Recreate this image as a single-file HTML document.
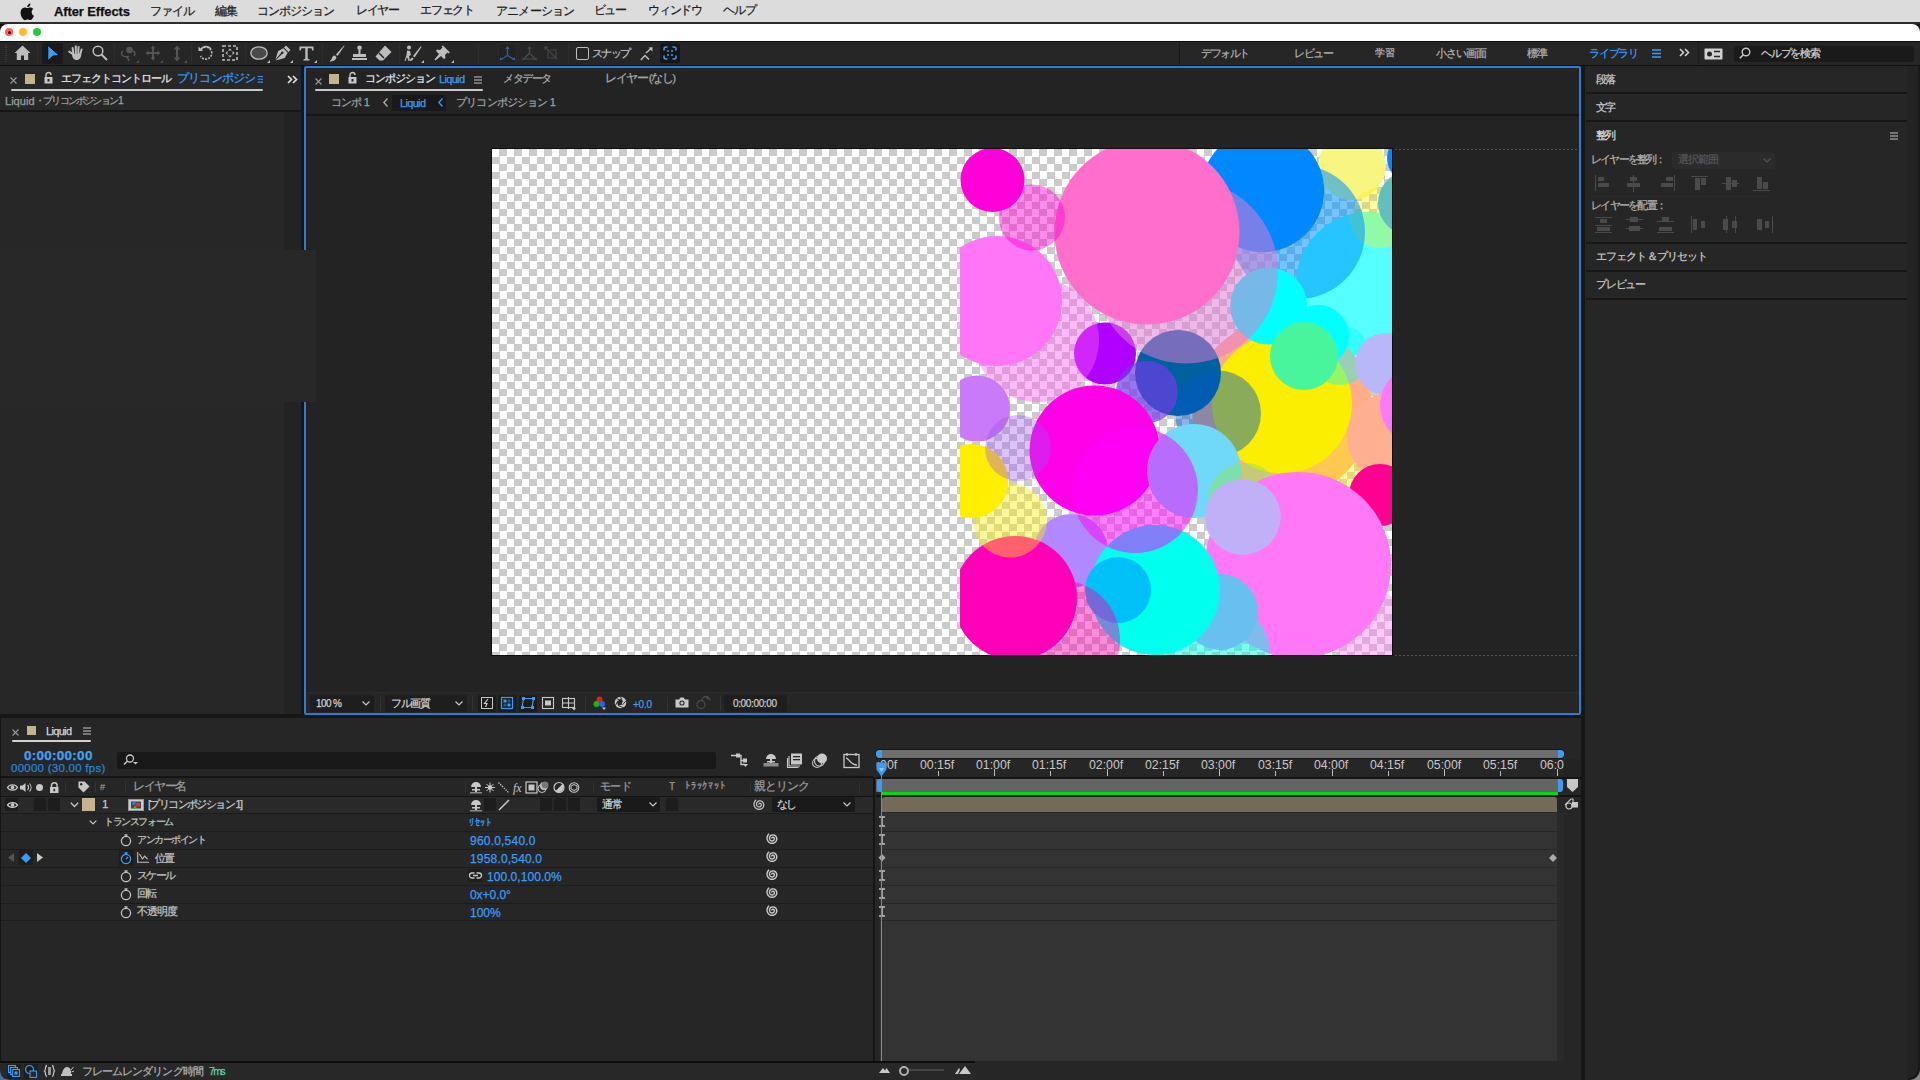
<!DOCTYPE html>
<html><head><meta charset="utf-8">
<style>
*{margin:0;padding:0;box-sizing:border-box}
html,body{width:1920px;height:1080px;overflow:hidden;background:#161616;font-family:"Liberation Sans",sans-serif}
.a{position:absolute}
.t{position:absolute;white-space:nowrap;line-height:1;-webkit-text-stroke:0.25px currentColor}
#menubar{left:0;top:0;width:1920px;height:22px;background:#dcdcdc}
#menubar .t{top:5px;font-size:12.5px;color:#1e1e1e;letter-spacing:-1.2px}
#title{left:0;top:24px;width:1920px;height:17px;background:#fff;border-radius:8px 8px 0 0}
#toolbar{left:0;top:42px;width:1920px;height:23px;background:#262626}
.pan{position:absolute;background:#232323}
.checker{background:repeating-conic-gradient(#cbcbcb 0 25%,#fff 0 50%) 0 0/15px 15px}
.g{color:#a8a8a8;font-size:11px;letter-spacing:-0.6px}
.w{color:#d8d8d8;font-size:11px;letter-spacing:-0.6px}
.b{color:#3d9cf2}
.sep{position:absolute;width:1px;background:#1b1b1b}
.hl{position:absolute;height:2px;background:#161616}
svg{position:absolute;overflow:visible}
</style></head><body>
<!-- menu bar -->
<div id="menubar" class="a">
  <svg style="left:20px;top:3px" width="14" height="17" viewBox="0 0 14 17"><path d="M11.6 9c0-2 1.6-2.9 1.7-3-1-1.4-2.4-1.6-2.9-1.6-1.2-.1-2.4.7-3 .7s-1.6-.7-2.6-.7C3.4 4.5 2 5.3 1.3 6.6c-1.5 2.6-.4 6.4 1 8.5.7 1 1.5 2.1 2.6 2.1 1 0 1.4-.7 2.7-.7s1.6.7 2.7.6c1.1 0 1.8-1 2.5-2 .8-1.1 1.1-2.2 1.1-2.3 0 0-2.3-.9-2.3-3.8zM9.6 3c.6-.7.9-1.6.8-2.5-.8 0-1.8.5-2.3 1.2-.5.6-1 1.5-.8 2.4.9.1 1.8-.4 2.3-1.1z" fill="#111"/></svg>
  <div class="t" style="left:54px;top:5px;font-weight:bold;letter-spacing:0;color:#111;font-size:13.0px;letter-spacing:-0.11px">After Effects</div>
  <div class="t" style="left:150px;font-size:12.11px;letter-spacing:-1.0px">ファイル</div>
  <div class="t" style="left:215px;font-size:11.68px;letter-spacing:-1.5px">編集</div>
  <div class="t" style="left:257px;font-size:12.13px;letter-spacing:-1.08px">コンポジション</div>
  <div class="t" style="left:356px;font-size:11.87px;letter-spacing:-1.34px">レイヤー</div>
  <div class="t" style="left:420px;font-size:11.96px;letter-spacing:-1.25px">エフェクト</div>
  <div class="t" style="left:496px;font-size:12.33px;letter-spacing:-0.83px">アニメーション</div>
  <div class="t" style="left:594px;font-size:11.57px;letter-spacing:-1.75px">ビュー</div>
  <div class="t" style="left:648px;font-size:11.96px;letter-spacing:-1.25px">ウィンドウ</div>
  <div class="t" style="left:723px;font-size:11.89px;letter-spacing:-1.25px">ヘルプ</div>
</div>
<div class="a" style="left:0;top:22px;width:1920px;height:2px;background:#2e2e2e"></div>
<div class="a" style="left:0;top:24px;width:12px;height:12px;background:#111"></div>
<div id="title" class="a">
  <div class="a" style="left:5px;top:4px;width:8px;height:8px;border-radius:50%;background:#fe5f57"><div class="a" style="left:2.5px;top:2.5px;width:3px;height:3px;border-radius:50%;background:#4d0000"></div></div>
  <div class="a" style="left:19px;top:4px;width:8px;height:8px;border-radius:50%;background:#febc2e"></div>
  <div class="a" style="left:33px;top:4px;width:8px;height:8px;border-radius:50%;background:#28c840"></div>
</div>
<div class="a" style="left:0;top:41px;width:1920px;height:1px;background:#0c0c0c"></div>
<div id="toolbar" class="a">
  <!-- grip -->
  <div class="a" style="left:5px;top:3px;width:2px;height:17px;background:repeating-linear-gradient(#3a3a3a 0 1px,transparent 1px 2px)"></div>
  <!-- home -->
  <svg style="left:14px;top:3px" width="17" height="16" viewBox="0 0 17 16"><path d="M8.5 0.5L0.5 8h2.3v7h4.2v-4.5h3v4.5h4.2V8h2.3z" fill="#bdbdbd"/></svg>
  <div class="sep" style="left:37px;top:2px;height:19px;background:#2e2e2e"></div>
  <!-- selection -->
  <div class="a" style="left:42px;top:1px;width:21px;height:21px;background:#1a1a1a;border-radius:2px"></div>
  <svg style="left:47px;top:2px" width="13" height="18" viewBox="0 0 13 18"><path d="M0.8 1.2L12 11.3 6 12 0.8 16.8z" fill="#3c9ef3" stroke="#000" stroke-width="0.8" stroke-linejoin="miter"/></svg>
  <!-- hand -->
  <svg style="left:68px;top:45px;top:3px" width="16" height="16" viewBox="0 0 16 16"><g stroke="#bdbdbd" stroke-width="2" stroke-linecap="round" fill="none"><path d="M4.6 9L1.3 6.6"/><path d="M5.2 8.5L4.6 3"/><path d="M7.8 8L7.8 1.3"/><path d="M10.2 8L10.6 2"/><path d="M12.2 9L13.6 4.5"/></g><path d="M4 8.5h9.3c0 4-1.5 6.5-4.8 6.5C5.5 15 4 12.5 4 8.5z" fill="#bdbdbd"/></svg>
  <!-- zoom -->
  <svg style="left:92px;top:3px" width="16" height="16" viewBox="0 0 16 16"><circle cx="6" cy="6" r="4.8" fill="none" stroke="#bdbdbd" stroke-width="1.5"/><path d="M9.5 9.5L15 15" stroke="#bdbdbd" stroke-width="2"/></svg>
  <div class="sep" style="left:114px;top:2px;height:19px;background:#2e2e2e"></div>
  <!-- dim tools -->
  <svg style="left:120px;top:3px" width="18" height="17" viewBox="0 0 18 17"><circle cx="9.5" cy="5" r="3.3" fill="#555"/><path d="M3 6a3 3 0 00-1 4c1 2 4 2 7 1.5M7 13l2 1.5-1 1.5M13 6c2 1 3 3 1 5" fill="none" stroke="#555" stroke-width="1.4"/></svg>
  <svg style="left:145px;top:3px" width="16" height="16" viewBox="0 0 16 16"><path d="M8 0.5l2.5 3H9v3.5h3.5V5.5l3 2.5-3 2.5V9H9v3.5h1.5L8 15.5l-2.5-3H7V9H3.5v1.5L0.5 8l3-2.5V7H7V3.5H5.5z" fill="#555"/></svg>
  <svg style="left:171px;top:3px" width="12" height="17" viewBox="0 0 12 17"><path d="M6 0.5l3.5 4H7v8h2.5L6 16.5l-3.5-4H5v-8H2.5z" fill="#555"/></svg>
  <div class="a" style="left:136px;top:18px;width:3px;height:3px;background:#555;clip-path:polygon(100% 0,100% 100%,0 100%)"></div>
  <div class="a" style="left:160px;top:18px;width:3px;height:3px;background:#555;clip-path:polygon(100% 0,100% 100%,0 100%)"></div>
  <div class="a" style="left:184px;top:18px;width:3px;height:3px;background:#555;clip-path:polygon(100% 0,100% 100%,0 100%)"></div>
  <div class="sep" style="left:191px;top:2px;height:19px;background:#2e2e2e"></div>
  <!-- rotate -->
  <svg style="left:198px;top:3px" width="16" height="16" viewBox="0 0 16 16"><path d="M3 4.5A6 6 0 1 1 2.5 11" fill="none" stroke="#bdbdbd" stroke-width="1.6" stroke-dasharray="2 1.2"/><path d="M3 4.5A6 6 0 0 1 13 4" fill="none" stroke="#bdbdbd" stroke-width="1.6"/><path d="M0.5 1.5L5 6H0.5z" fill="#bdbdbd"/></svg>
  <!-- region of interest -->
  <svg style="left:222px;top:3px" width="16" height="16" viewBox="0 0 16 16"><rect x="1" y="1" width="14" height="14" fill="none" stroke="#bdbdbd" stroke-width="1.6" stroke-dasharray="3 2"/><path d="M8 3.5l2 2H6zM8 12.5l2-2H6zM3.5 8l2 2V6zM12.5 8l-2 2V6z" fill="#bdbdbd"/></svg>
  <div class="sep" style="left:245px;top:2px;height:19px;background:#2e2e2e"></div>
  <!-- ellipse -->
  <svg style="left:250px;top:4px" width="18" height="14" viewBox="0 0 18 14"><ellipse cx="9" cy="7" rx="8.2" ry="6.2" fill="#4a4a4a" stroke="#bdbdbd" stroke-width="1.3"/></svg>
  <div class="a" style="left:267px;top:18px;width:3px;height:3px;background:#bdbdbd;clip-path:polygon(100% 0,100% 100%,0 100%)"></div>
  <!-- pen -->
  <svg style="left:275px;top:3px" width="16" height="16" viewBox="0 0 16 16"><path d="M11 0.5l4.5 4.5-2 2L9 2.5zM8.3 3.3l4.4 4.4-3 5.3L0.5 15.5 7 9a1.3 1.3 0 10-1-1L0.5 14.5 3 6.3z" fill="#bdbdbd"/></svg>
  <div class="a" style="left:290px;top:18px;width:3px;height:3px;background:#bdbdbd;clip-path:polygon(100% 0,100% 100%,0 100%)"></div>
  <!-- T -->
  <svg style="left:299px;top:4px" width="15" height="15" viewBox="0 0 15 15"><path d="M0.5 0.5h14v4h-1.3l-.7-2.2H8.7v10.5l1.8.5v1.2h-6v-1.2l1.8-.5V2.3H2.5L1.8 4.5H0.5z" fill="#bdbdbd"/></svg>
  <div class="a" style="left:314px;top:18px;width:3px;height:3px;background:#bdbdbd;clip-path:polygon(100% 0,100% 100%,0 100%)"></div>
  <div class="sep" style="left:322px;top:2px;height:19px;background:#2e2e2e"></div>
  <!-- brush -->
  <svg style="left:329px;top:3px" width="16" height="17" viewBox="0 0 16 17"><path d="M15 0.5L7 9.5l1.5 1.5L15.5 1z" fill="#bdbdbd"/><path d="M6 10.5c-2 0-3 1.5-3.2 3.2L0.5 16.5c3 0 6-.8 7-4z" fill="#bdbdbd"/></svg>
  <!-- stamp -->
  <svg style="left:351px;top:3px" width="17" height="16" viewBox="0 0 17 16"><circle cx="8.5" cy="2.8" r="2.3" fill="#bdbdbd"/><path d="M7.5 4.5h2v4.5h5.5v3H2V9h5.5zM1 13h15v2H1z" fill="#bdbdbd"/></svg>
  <!-- eraser -->
  <svg style="left:375px;top:3px" width="17" height="16" viewBox="0 0 17 16"><path d="M10 0.5l6.5 6.5-8.5 8.5H4.5L0.5 11.5z" fill="#bdbdbd"/><path d="M4 8l5 5" stroke="#262626" stroke-width="1.5"/></svg>
  <div class="sep" style="left:399px;top:2px;height:19px;background:#2e2e2e"></div>
  <!-- roto -->
  <svg style="left:404px;top:3px" width="18" height="17" viewBox="0 0 18 17"><circle cx="5" cy="2.5" r="2" fill="#bdbdbd"/><path d="M3 5.5l3 .5 1 4-2 1 1 5H4.5l-1.5-4-1.5 4H0.5l2-6zM17 1L9 11l1.5 1.5L17.5 2zM8 12.5c-1 .5-1.5 2-3 3.5 2 0 4-.5 4.5-2.5z" fill="#bdbdbd"/></svg>
  <div class="a" style="left:421px;top:18px;width:3px;height:3px;background:#bdbdbd;clip-path:polygon(100% 0,100% 100%,0 100%)"></div>
  <!-- pin -->
  <svg style="left:434px;top:3px" width="17" height="16" viewBox="0 0 17 16"><path d="M9 0.5l7 7-1.5 1-1-1-2.5 2.5.5 3-1.5 1-3-3L1.5 15.5 0.5 14.5 5 9 2 6l1-1.5 3 .5L8.5 2.5l-1-1z" fill="#bdbdbd"/></svg>
  <div class="a" style="left:451px;top:18px;width:3px;height:3px;background:#bdbdbd;clip-path:polygon(100% 0,100% 100%,0 100%)"></div>
  <div class="sep" style="left:478px;top:2px;height:19px;background:#2e2e2e"></div>
  <!-- 3d axis -->
  <div class="a" style="left:498px;top:1px;width:19px;height:20px;background:#222;border:1px solid #2a2a2a;border-radius:2px"></div>
  <svg style="left:499px;top:4px" width="17" height="16" viewBox="0 0 17 16"><path d="M8.5 2v7.5L2 13.5M8.5 9.5l6.5 4" fill="none" stroke="#2d62a0" stroke-width="1.3"/><path d="M8.5 0l2.2 3h-4.4zM0.5 14.5l1-3.5 2.2 2.7zM16.5 14.5l-1-3.5-2.2 2.7z" fill="#2d62a0"/></svg>
  <svg style="left:521px;top:4px" width="17" height="16" viewBox="0 0 17 16"><path d="M8.5 2v5M8.5 7L3 13M8.5 7l5.5 6M3 13h11" fill="none" stroke="#4a4a4a" stroke-width="1.2"/><path d="M8.5 0l2 2.7h-4zM1 14.5l.8-3.2 2 2.4zM16 14.5l-.8-3.2-2 2.4z" fill="#4a4a4a"/></svg>
  <svg style="left:544px;top:4px" width="15" height="15" viewBox="0 0 15 15"><path d="M1 1l12 12M4 4v8h8V4H6" fill="none" stroke="#444" stroke-width="1.2"/><path d="M0.5 0.5h4l-4 4z" fill="#444"/></svg>
  <div class="sep" style="left:568px;top:2px;height:19px;background:#2e2e2e"></div>
  <div class="a" style="left:576px;top:5px;width:13px;height:13px;border:1.6px solid #bdbdbd;border-radius:2px"></div>
  <div class="t" style="left:592px;top:6px;color:#c0c0c0;font-size:10.73px;letter-spacing:-1.54px">スナップ</div>
  <svg style="left:640px;top:5px" width="13" height="14" viewBox="0 0 13 14"><path d="M6 6l6-5.5" stroke="#bdbdbd" stroke-width="1.4"/><path d="M8.5 0.5h4v4z" fill="#bdbdbd"/><path d="M0.8 13L5 8.5l4 4" fill="none" stroke="#bdbdbd" stroke-width="1.5"/></svg>
  <div class="a" style="left:660px;top:1px;width:20px;height:20px;background:#161616;border-radius:2px"></div>
  <svg style="left:663px;top:4px" width="14" height="14" viewBox="0 0 14 14"><path d="M1 4.5V3a2 2 0 012-2h1.5M9.5 1H11a2 2 0 012 2v1.5M13 9.5V11a2 2 0 01-2 2H9.5M4.5 13H3a2 2 0 01-2-2V9.5" fill="none" stroke="#3c9ef3" stroke-width="1.5"/><circle cx="5" cy="5" r="1" fill="#3c9ef3"/><circle cx="9" cy="5" r="1" fill="#3c9ef3"/><circle cx="5" cy="9" r="1" fill="#3c9ef3"/><circle cx="9" cy="9" r="1" fill="#3c9ef3"/></svg>
  <!-- right workspaces -->
  <div class="sep" style="left:1179px;top:0;height:23px;background:#1a1a1a"></div>
  <div class="t g" style="left:1201px;top:6px;color:#b0b0b0;font-size:10.85px;letter-spacing:-1.4px">デフォルト</div>
  <div class="t g" style="left:1294px;top:6px;color:#b0b0b0;font-size:10.78px;letter-spacing:-1.47px">レビュー</div>
  <div class="t g" style="left:1375px;top:6px;color:#b0b0b0;font-size:10.34px;letter-spacing:-0.21px">学習</div>
  <div class="t g" style="left:1436px;top:6px;color:#b0b0b0;font-size:11.08px;letter-spacing:-1.1px">小さい画面</div>
  <div class="t g" style="left:1527px;top:6px;color:#b0b0b0;font-size:10.73px;letter-spacing:-1.41px">標準</div>
  <div class="t b" style="left:1589px;top:6px;font-size:11.02px;letter-spacing:-1.18px">ライブラリ</div>
  <svg style="left:1652px;top:7px" width="9" height="9" viewBox="0 0 9 9"><path d="M0 1h9M0 4.5h9M0 8h9" stroke="#3d9cf2" stroke-width="1.4"/></svg>
  <svg style="left:1679px;top:6px" width="11" height="9" viewBox="0 0 11 9"><path d="M1 1l3.5 3.5L1 8M6 1l3.5 3.5L6 8" fill="none" stroke="#d0d0d0" stroke-width="1.6"/></svg>
  <div class="sep" style="left:1698px;top:0;height:23px;background:#1e1e1e"></div>
  <svg style="left:1704px;top:6px" width="19" height="12" viewBox="0 0 19 12"><rect x="0.5" y="0.5" width="18" height="11" rx="1" fill="#d0d0d0"/><circle cx="5.5" cy="6" r="2.5" fill="#262626"/><path d="M10 3.5h6M10 8.5h6" stroke="#262626" stroke-width="1.5"/></svg>
  <div class="a" style="left:1734px;top:4px;width:180px;height:16px;background:#1a1a1a;border-radius:3px"></div>
  <svg style="left:1739px;top:5px" width="12" height="12" viewBox="0 0 12 12"><circle cx="7" cy="5" r="3.8" fill="none" stroke="#c8c8c8" stroke-width="1.4"/><path d="M4.3 7.7L0.8 11.2" stroke="#c8c8c8" stroke-width="1.6"/></svg>
  <div class="t w" style="left:1761px;top:6px;color:#d0d0d0;font-size:11.02px;letter-spacing:-1.2px">ヘルプを検索</div>
</div>
<div class="a" style="left:0;top:65px;width:1920px;height:1px;background:#101010"></div>
<!-- left panel -->
<div class="pan" style="left:0;top:66px;width:301px;height:648px;background:#272727">
  <svg style="left:10px;top:11px" width="7" height="7" viewBox="0 0 7 7"><path d="M0.5 0.5l6 6M6.5 0.5l-6 6" stroke="#9a9a9a" stroke-width="1.1"/></svg>
  <div class="a" style="left:25px;top:8px;width:10px;height:10px;background:#c5b38d"></div>
  <svg style="left:44px;top:6px" width="9" height="12" viewBox="0 0 9 12"><path d="M2 5V3a2.5 2.5 0 015 0" fill="none" stroke="#c8c8c8" stroke-width="1.4"/><rect x="0.5" y="5" width="8" height="6.5" fill="#c8c8c8"/><rect x="3.5" y="7" width="2" height="2.5" fill="#232323"/></svg>
  <div class="t" style="left:61px;top:7px;color:#e6e6e6;font-size:11.24px;letter-spacing:-1.0px">エフェクトコントロール</div>
  <div class="a" style="left:177px;top:4px;width:86px;height:18px;overflow:hidden"><div class="t b" style="left:0;top:3px;font-size:11.5px;letter-spacing:-0.8px">プリコンポジション 1</div></div>
  <div class="a" style="left:11px;top:23px;width:252px;height:2px;background:#c8c8c8;border-radius:1px"></div>
  <svg style="left:287px;top:9px" width="11" height="9" viewBox="0 0 11 9"><path d="M1 1l3.5 3.5L1 8M6 1l3.5 3.5L6 8" fill="none" stroke="#e0e0e0" stroke-width="1.7"/></svg>
  <div class="t" style="left:5px;top:30px;color:#a0a0a0;font-size:11.0px;letter-spacing:0.03px">Liquid</div><div class="t" style="left:35px;top:30px;color:#a0a0a0;font-size:10.41px;letter-spacing:-1.8px">・プリコンポジション 1</div>
  <div class="a" style="left:0;top:44px;width:301px;height:2px;background:#171717"></div>
  <div class="a" style="left:284px;top:46px;width:17px;height:138px;background:#232323"></div>
</div>
<div class="a" style="left:284px;top:402px;width:17px;height:312px;background:#232323"></div>
<!-- comp panel -->
<div class="pan" style="left:304px;top:66px;width:1277px;height:649px;border:2px solid #2f7bd3;border-radius:2px">
</div>
<div class="a" style="left:306px;top:68px;width:1273px;height:645px">
  <svg style="left:9px;top:10px" width="7" height="7" viewBox="0 0 7 7"><path d="M0.5 0.5l6 6M6.5 0.5l-6 6" stroke="#9a9a9a" stroke-width="1.1"/></svg>
  <div class="a" style="left:23px;top:6px;width:10px;height:10px;background:#c5b38d"></div>
  <svg style="left:42px;top:4px" width="9" height="12" viewBox="0 0 9 12"><path d="M2 5V3a2.5 2.5 0 015 0" fill="none" stroke="#c8c8c8" stroke-width="1.4"/><rect x="0.5" y="5" width="8" height="6.5" fill="#c8c8c8"/><rect x="3.5" y="7" width="2" height="2.5" fill="#232323"/></svg>
  <div class="t" style="left:59px;top:5px;color:#e6e6e6;font-size:11.2px;letter-spacing:-1.0px">コンポジション</div>
  <div class="t b" style="left:133px;top:6px;font-size:11.0px;letter-spacing:-0.67px">Liquid</div>
  <svg style="left:168px;top:8px" width="8" height="8" viewBox="0 0 8 8"><path d="M0 1h8M0 4h8M0 7h8" stroke="#c8c8c8" stroke-width="1.2"/></svg>
  <div class="a" style="left:9px;top:21px;width:168px;height:2px;background:#c8c8c8;border-radius:1px"></div>
  <div class="t" style="left:197px;top:5px;color:#a8a8a8;font-size:10.77px;letter-spacing:-1.5px">メタデータ</div>
  <div class="t" style="left:299px;top:5px;color:#a8a8a8;font-size:11.5px;letter-spacing:-1.48px">レイヤー (なし)</div>
  <div class="t" style="left:25px;top:29px;color:#a0a0a0;font-size:11.0px;letter-spacing:-0.8px">コンポ 1</div>
  <svg style="left:77px;top:30px" width="5" height="9" viewBox="0 0 5 9"><path d="M4.5 0.5L0.8 4.5l3.7 4" fill="none" stroke="#b0b0b0" stroke-width="1.2"/></svg>
  <div class="a" style="left:86px;top:27px;width:54px;height:16px;background:#181818;border-radius:2px"></div>
  <div class="t b" style="left:94px;top:30px;font-size:11.0px;letter-spacing:-0.67px">Liquid</div>
  <svg style="left:132px;top:30px" width="5" height="9" viewBox="0 0 5 9"><path d="M4.5 0.5L0.8 4.5l3.7 4" fill="none" stroke="#3d9cf2" stroke-width="1.3"/></svg>
  <div class="t" style="left:150px;top:29px;color:#a0a0a0;font-size:11.0px;letter-spacing:-0.82px">プリコンポジション 1</div>
  <div class="a" style="left:0;top:46px;width:1273px;height:2px;background:#161616"></div>
  <!-- guides -->
  <div class="a" style="left:1089px;top:81px;width:184px;height:1px;background:repeating-linear-gradient(90deg,#5a5040 0 2px,transparent 2px 4px)"></div>
  <div class="a" style="left:1089px;top:587px;width:184px;height:1px;background:repeating-linear-gradient(90deg,#5a5040 0 2px,transparent 2px 4px)"></div>
  <!-- bottom toolbar -->
  <div class="a" style="left:0;top:624px;width:1273px;height:1px;background:#2c2c2c"></div>
  <div class="a" style="left:0;top:625px;width:1273px;height:20px;background:#262626"></div>
  <div class="a" style="left:4px;top:627px;width:64px;height:17px;background:#1e1e1e;border-radius:2px"></div>
  <div class="t" style="left:10px;top:631px;color:#d0d0d0;font-size:10.0px;letter-spacing:-0.59px">100 %</div>
  <svg style="left:56px;top:633px" width="8" height="5" viewBox="0 0 8 5"><path d="M0.5 0.5L4 4l3.5-3.5" fill="none" stroke="#c8c8c8" stroke-width="1.2"/></svg>
  <div class="sep" style="left:74px;top:628px;height:15px;background:#333"></div>
  <div class="a" style="left:79px;top:627px;width:82px;height:17px;background:#1e1e1e;border-radius:2px"></div>
  <div class="t" style="left:85px;top:630px;color:#d0d0d0;font-size:11.0px;letter-spacing:-1.34px">フル画質</div>
  <svg style="left:149px;top:633px" width="8" height="5" viewBox="0 0 8 5"><path d="M0.5 0.5L4 4l3.5-3.5" fill="none" stroke="#c8c8c8" stroke-width="1.2"/></svg>
  <div class="sep" style="left:166px;top:628px;height:15px;background:#333"></div>
  <div class="a" style="left:172px;top:627px;width:18px;height:17px;background:#1c1c1c"></div>
  <svg style="left:175px;top:629px" width="12" height="12" viewBox="0 0 12 12"><rect x="0.5" y="0.5" width="11" height="11" fill="none" stroke="#c8c8c8" stroke-width="1"/><path d="M7 2L3.5 6.5h2.5L4.5 10" fill="none" stroke="#c8c8c8" stroke-width="1.2"/></svg>
  <div class="a" style="left:192px;top:627px;width:18px;height:17px;background:#1c1c1c"></div>
  <svg style="left:195px;top:629px" width="12" height="12" viewBox="0 0 12 12"><rect x="0.5" y="0.5" width="11" height="11" fill="none" stroke="#3d9cf2" stroke-width="1.2"/><rect x="2.5" y="2.5" width="3" height="3" fill="#3d9cf2"/><rect x="6.5" y="6.5" width="3" height="3" fill="#3d9cf2"/><rect x="6.5" y="2.5" width="3" height="3" fill="#1f5a99"/><rect x="2.5" y="6.5" width="3" height="3" fill="#1f5a99"/></svg>
  <div class="a" style="left:213px;top:627px;width:18px;height:17px;background:#1c1c1c"></div>
  <svg style="left:215px;top:629px" width="14" height="12" viewBox="0 0 14 12"><path d="M2.5 1.5h10l-1.5 9H1z" fill="none" stroke="#3d9cf2" stroke-width="1.2"/><rect x="1" y="0" width="3" height="3" fill="#3d9cf2"/><rect x="11" y="0" width="3" height="3" fill="#3d9cf2"/><rect x="0" y="9" width="3" height="3" fill="#3d9cf2"/><rect x="10" y="9" width="3" height="3" fill="#3d9cf2"/></svg>
  <svg style="left:236px;top:629px" width="12" height="12" viewBox="0 0 12 12"><rect x="0.5" y="0.5" width="11" height="11" fill="none" stroke="#c8c8c8" stroke-width="1.1"/><rect x="3" y="3.5" width="6" height="5" fill="#c8c8c8"/></svg>
  <svg style="left:256px;top:628px" width="15" height="15" viewBox="0 0 15 15"><rect x="0.5" y="2.5" width="12" height="9" fill="none" stroke="#c8c8c8" stroke-width="1.1"/><path d="M6.5 1v12M0 7h13" stroke="#c8c8c8" stroke-width="1.1"/><path d="M10 12h4l-2 2.5z" fill="#c8c8c8"/></svg>
  <div class="sep" style="left:279px;top:628px;height:15px;background:#333"></div>
  <svg style="left:287px;top:628px" width="14" height="14" viewBox="0 0 14 14"><circle cx="6.5" cy="3.5" r="3" fill="#e02020"/><circle cx="3.5" cy="8" r="3" fill="#20b020"/><circle cx="9" cy="8" r="3" fill="#3060e0"/><path d="M9 11.5h4l-2 2.5z" fill="#c8c8c8"/></svg>
  <svg style="left:308px;top:628px" width="13" height="13" viewBox="0 0 13 13"><circle cx="6.5" cy="6.5" r="5.8" fill="#c8c8c8"/><path d="M6.5 2.5l2 3-1 3.5-3.5.3-1-3.3z" fill="#262626"/><path d="M6.5 0.7l2 4.8M11.8 5l-3.3 3.9M9.5 11.8l-5.5-2.5M1.5 9.5l2.3-4.7M2.5 2.5L8.5 5.5" stroke="#262626" stroke-width="0.9"/></svg>
  <div class="t b" style="left:327px;top:632px;font-size:10.0px;letter-spacing:-0.25px">+0.0</div>
  <div class="sep" style="left:361px;top:628px;height:15px;background:#333"></div>
  <svg style="left:369px;top:629px" width="14" height="11" viewBox="0 0 14 11"><path d="M0.5 2.5h3.5l1.5-2h3l1.5 2h3.5v8H0.5z" fill="#c8c8c8"/><circle cx="7" cy="6" r="2.6" fill="#262626"/><circle cx="7" cy="6" r="1.5" fill="#c8c8c8"/></svg>
  <svg style="left:390px;top:628px" width="14" height="13" viewBox="0 0 14 13"><path d="M1 8.5a4 4 0 008 0 4 4 0 00-8 0zM6 4.5a4 4 0 018 0M10 1l2.5 2.5" fill="none" stroke="#4a4a4a" stroke-width="1.3"/></svg>
  <div class="sep" style="left:414px;top:628px;height:15px;background:#333"></div>
  <div class="a" style="left:418px;top:627px;width:63px;height:17px;background:#1e1e1e;border-radius:2px"></div>
  <div class="t" style="left:427px;top:631px;color:#c8c8c8;font-size:10.0px;letter-spacing:-0.36px">0:00:00:00</div>
</div>
<div class="a" style="left:491px;top:148px;width:902px;height:508px;background:#0e0e0e"></div>
<div class="a checker" style="left:492px;top:149px;width:900px;height:506px"></div>
<div class="a" style="left:0;top:250px;width:316px;height:152px;background:#282828"></div>
<!-- composition circles -->
<svg style="left:492px;top:149px" width="900" height="506" viewBox="492 149 900 506"><defs><clipPath id="cl"><rect x="960" y="149" width="432" height="506"/></clipPath></defs><g clip-path="url(#cl)">
<circle cx="1105" cy="353.5" r="31" fill="#b000ff"/>
<circle cx="1037" cy="340" r="62" fill="rgba(255,90,240,0.42)"/>
<circle cx="997" cy="301" r="65" fill="#ff76f6"/>
<circle cx="1368" cy="284" r="72" fill="#55ffff"/>
<circle cx="1352" cy="166" r="34" fill="#f8f580"/>
<circle cx="1380" cy="218" r="30" fill="rgba(255,240,0,0.35)"/>
<circle cx="1410" cy="203" r="32" fill="#60c0c0"/>
<circle cx="1412" cy="158" r="25" fill="#0088ff"/>
<circle cx="1298" cy="232" r="67" fill="rgba(0,150,255,0.55)"/>
<circle cx="1262.6" cy="190.6" r="61.5" fill="#0088ff"/>
<circle cx="1282" cy="409" r="90" fill="#ffae88"/>
<circle cx="1340" cy="470" r="40" fill="rgba(255,240,0,0.4)"/>
<circle cx="1392" cy="437" r="45" fill="#ffb090"/>
<circle cx="1282" cy="403.5" r="70" fill="#fbee00"/>
<circle cx="1178" cy="373" r="43" fill="#0060a0"/>
<circle cx="1147" cy="392" r="31" fill="rgba(110,60,230,0.7)"/>
<circle cx="1218" cy="413.5" r="43" fill="rgba(0,90,200,0.45)"/>
<circle cx="1268.7" cy="306" r="38.5" fill="#00ffff"/>
<circle cx="1318" cy="336" r="31" fill="#00ffff"/>
<circle cx="1340" cy="355" r="30" fill="rgba(0,255,255,0.4)"/>
<circle cx="1304" cy="356" r="34" fill="#48f59c"/>
<circle cx="1386" cy="364" r="31" fill="#b8b8f8"/>
<circle cx="1186" cy="271.5" r="92" fill="rgba(222,121,211,0.53)"/>
<circle cx="1147" cy="232" r="92.5" fill="#ff6ecb"/>
<circle cx="1032" cy="217.5" r="33" fill="rgba(255,0,210,0.45)"/>
<circle cx="992.5" cy="180" r="32" fill="#ff00d8"/>
<circle cx="977" cy="408.5" r="33" fill="#c87af8"/>
<circle cx="971.3" cy="481" r="37" fill="#ffee00"/>
<circle cx="1071" cy="551" r="37" fill="#b288ff"/>
<circle cx="1094.6" cy="450.5" r="65" fill="#ff00e8"/>
<circle cx="1018" cy="448" r="33" fill="rgba(160,80,240,0.35)"/>
<circle cx="1194" cy="471" r="47" fill="#70d8f8"/>
<circle cx="1245" cy="500" r="37" fill="rgba(140,230,100,0.5)"/>
<circle cx="1380" cy="495" r="31" fill="#ff0090"/>
<circle cx="1420" cy="405" r="40" fill="#ff78f8"/>
<circle cx="1370" cy="630" r="40" fill="rgba(255,120,240,0.4)"/>
<circle cx="1298" cy="565" r="93" fill="#ff78f5"/>
<circle cx="1215" cy="655" r="55" fill="rgba(0,255,230,0.5)"/>
<circle cx="1220" cy="612" r="38" fill="#68c0f0"/>
<circle cx="1155" cy="590" r="65" fill="#00ffee"/>
<circle cx="1135" cy="490" r="63" fill="rgba(255,0,255,0.5)"/>
<circle cx="1118" cy="590" r="33" fill="#00c0f8"/>
<circle cx="1060" cy="640" r="60" fill="rgba(255,0,180,0.45)"/>
<circle cx="1015" cy="598" r="62" fill="#ff00b8"/>
<circle cx="1010" cy="520.5" r="37" fill="rgba(255,240,0,0.4)"/>
<circle cx="1242.7" cy="517" r="38" fill="#c0b0f8"/>
</g></svg>
<!-- right panel -->
<div class="pan" style="left:1585px;top:66px;width:335px;height:1014px;background:#262626">
  <div class="t" style="left:11px;top:8px;color:#c8c8c8;font-size:10.6px;letter-spacing:-1.8px">段落</div>
  <div class="hl" style="left:1px;top:26px;width:321px;height:2px;background:#171717"></div>
  <div class="t" style="left:11px;top:36px;color:#c8c8c8;font-size:10.6px;letter-spacing:-1.8px">文字</div>
  <div class="hl" style="left:1px;top:54px;width:321px;height:2px;background:#171717"></div>
  <div class="t" style="left:11px;top:64px;color:#dcdcdc;font-size:10.6px;letter-spacing:-1.8px">整列</div>
  <svg style="left:305px;top:66px" width="8" height="8" viewBox="0 0 8 8"><path d="M0 1h8M0 4h8M0 7h8" stroke="#c8c8c8" stroke-width="1.2"/></svg>
  <div class="t" style="left:6px;top:88px;color:#b0b0b0;font-size:10.8px;letter-spacing:-1.8px">レイヤーを整列：</div>
  <div class="a" style="left:87px;top:86px;width:103px;height:17px;background:#2b2b2b;border-radius:3px"></div>
  <div class="t" style="left:93px;top:88px;color:#555;font-size:11.0px;letter-spacing:-1.0px">選択範囲</div>
  <svg style="left:178px;top:92px" width="8" height="5" viewBox="0 0 8 5"><path d="M0.5 0.5L4 4l3.5-3.5" fill="none" stroke="#555" stroke-width="1.1"/></svg>
  <!-- align icons -->
  <svg style="left:10px;top:109px" width="180" height="17" viewBox="0 0 180 17">
    <g fill="#4a4a4a">
      <rect x="0" y="0" width="1" height="16"/><rect x="3" y="2" width="6" height="4"/><rect x="3" y="8" width="11" height="4"/>
      <rect x="38" y="0" width="1" height="17"/><rect x="35" y="2" width="7" height="4"/><rect x="32" y="8" width="13" height="4"/>
      <rect x="79" y="0" width="1" height="16"/><rect x="71" y="2" width="7" height="4"/><rect x="66" y="8" width="12" height="4"/>
      <rect x="96" y="1" width="17" height="1"/><rect x="100" y="3" width="5" height="12"/><rect x="106" y="3" width="5" height="7"/>
      <rect x="127" y="8" width="17" height="1"/><rect x="131" y="2" width="5" height="13"/><rect x="137" y="5" width="5" height="7"/>
      <rect x="158" y="15" width="17" height="1"/><rect x="162" y="2" width="5" height="12"/><rect x="168" y="7" width="5" height="7"/>
    </g>
  </svg>
  <div class="hl" style="left:6px;top:130px;width:181px;height:1px;background:#2a2a2a"></div>
  <div class="t" style="left:6px;top:134px;color:#b0b0b0;font-size:11.0px;letter-spacing:-1.72px">レイヤーを配置：</div>
  <svg style="left:10px;top:150px" width="180" height="17" viewBox="0 0 180 17">
    <g fill="#4a4a4a">
      <rect x="0" y="1" width="17" height="1"/><rect x="5" y="3" width="7" height="4"/><rect x="0" y="9" width="17" height="1"/><rect x="2" y="11" width="13" height="4"/><rect x="0" y="16" width="17" height="1"/>
      <rect x="31" y="3" width="17" height="1"/><rect x="35" y="1" width="8" height="5"/><rect x="31" y="12" width="17" height="1"/><rect x="34" y="10" width="11" height="5"/>
      <rect x="62" y="5" width="17" height="1"/><rect x="67" y="1" width="7" height="4"/><rect x="62" y="16" width="17" height="1"/><rect x="64" y="11" width="13" height="4"/>
      <rect x="96" y="0" width="1" height="17"/><rect x="98" y="3" width="4" height="11"/><rect x="106" y="5" width="4" height="7"/>
      <rect x="131" y="0" width="1" height="17"/><rect x="128" y="3" width="5" height="11"/><rect x="140" y="0" width="1" height="17"/><rect x="137" y="5" width="5" height="7"/>
      <rect x="177" y="0" width="1" height="17"/><rect x="162" y="3" width="5" height="11"/><rect x="170" y="5" width="4" height="7"/>
    </g>
  </svg>
  <div class="hl" style="left:1px;top:176px;width:321px;height:2px;background:#171717"></div>
  <div class="t" style="left:11px;top:185px;color:#c8c8c8;font-size:11.0px;letter-spacing:-0.9px">エフェクト＆プリセット</div>
  <div class="hl" style="left:1px;top:204px;width:321px;height:2px;background:#171717"></div>
  <div class="t" style="left:11px;top:213px;color:#c8c8c8;font-size:11.0px;letter-spacing:-1.25px">プレビュー</div>
  <div class="hl" style="left:1px;top:232px;width:321px;height:2px;background:#171717"></div>
  <div class="a" style="left:322px;top:0;width:11px;height:1014px;background:#232323"></div><div class="a" style="left:333px;top:0;width:2px;height:1014px;background:#1a1a1a"></div><div class="a" style="left:323px;top:1002px;width:12px;height:12px;background:#8a8a8a"><div class="a" style="left:0;top:0;width:12px;height:12px;background:#232323;border-bottom-right-radius:11px;border-right:2px solid #161616;border-bottom:2px solid #161616"></div></div>
</div>
<!-- timeline panel -->
<div class="pan" style="left:0;top:718px;width:1581px;height:362px;background:#262626"></div>
<div class="a" style="left:0;top:718px;width:1px;height:344px;background:#141414"></div>
<!-- tab -->
<svg style="left:12px;top:729px" width="7" height="7" viewBox="0 0 7 7"><path d="M0.5 0.5l6 6M6.5 0.5l-6 6" stroke="#9a9a9a" stroke-width="1.1"/></svg>
<div class="a" style="left:27px;top:726px;width:9px;height:9px;background:#c5b38d"></div>
<div class="t" style="left:46px;top:726px;color:#d8d8d8;font-size:11.0px;letter-spacing:-0.67px">Liquid</div>
<svg style="left:83px;top:727px" width="8" height="8" viewBox="0 0 8 8"><path d="M0 1h8M0 4h8M0 7h8" stroke="#c8c8c8" stroke-width="1.2"/></svg>
<div class="a" style="left:12px;top:740px;width:79px;height:2px;background:#d0d0d0;border-radius:1px"></div>
<!-- timecode -->
<div class="t" style="left:24px;top:749px;font-weight:bold;color:#3fa2f6;letter-spacing:0;font-size:13.5px;letter-spacing:0.26px">0:00:00:00</div>
<div class="t" style="left:11px;top:763px;color:#2b83d6;font-size:11.5px;letter-spacing:0.26px">00000 (30.00 fps)</div>
<!-- search -->
<div class="a" style="left:117px;top:752px;width:599px;height:17px;background:#181818;border-radius:3px"></div>
<svg style="left:123px;top:754px" width="16" height="12" viewBox="0 0 16 12"><circle cx="7" cy="4.5" r="3.5" fill="none" stroke="#c8c8c8" stroke-width="1.3"/><path d="M4.5 7L1 10.5" stroke="#c8c8c8" stroke-width="1.5"/><path d="M10 8h5l-2.5 2.5z" fill="#c8c8c8"/></svg>
<!-- timeline tool icons -->
<svg style="left:731px;top:753px" width="17" height="15" viewBox="0 0 17 15"><path d="M0 2.5h7M7 2.5h3v5h4M10 7.5v4h4" fill="none" stroke="#c8c8c8" stroke-width="1.4"/><rect x="5" y="0.5" width="4" height="4" fill="#c8c8c8"/><rect x="12" y="5.5" width="4" height="4" fill="#c8c8c8"/><path d="M12 11h5l-2.5 3z" fill="#c8c8c8"/></svg>
<svg style="left:763px;top:753px" width="16" height="14" viewBox="0 0 16 14"><path d="M3 6a5 5 0 0110 0z" fill="#c8c8c8"/><rect x="7" y="5" width="2" height="5" fill="#c8c8c8"/><rect x="4" y="8" width="8" height="1.5" fill="#c8c8c8"/><rect x="0.5" y="10" width="15" height="3.5" fill="#8a8a8a"/></svg>
<svg style="left:787px;top:753px" width="16" height="15" viewBox="0 0 16 15"><rect x="4" y="0.5" width="11" height="11" fill="#c8c8c8"/><rect x="6" y="3" width="7" height="1.3" fill="#262626"/><rect x="6" y="6" width="7" height="1.3" fill="#262626"/><path d="M2 3v10h11M0.5 5v9.5h11" fill="none" stroke="#c8c8c8" stroke-width="1.1"/></svg>
<svg style="left:812px;top:753px" width="16" height="15" viewBox="0 0 16 15"><circle cx="10" cy="5.5" r="5" fill="#c8c8c8"/><circle cx="7.5" cy="8" r="5" fill="none" stroke="#c8c8c8" stroke-width="1.1"/><circle cx="5" cy="10" r="4.5" fill="none" stroke="#c8c8c8" stroke-width="1.1"/></svg>
<svg style="left:843px;top:752px" width="17" height="16" viewBox="0 0 17 16"><rect x="1" y="2.5" width="15" height="13" fill="none" stroke="#c8c8c8" stroke-width="1.3"/><path d="M4 1v3M13 1v3" stroke="#c8c8c8" stroke-width="1.3"/><path d="M3 6c3 0 4 7 11 7" fill="none" stroke="#c8c8c8" stroke-width="1.3"/></svg>
<div class="a" style="left:0;top:776px;width:873px;height:2px;background:#141414"></div>
<!-- column header -->
<svg style="left:7px;top:782px" width="54" height="11" viewBox="0 0 54 11">
  <path d="M0.5 5.5C2.5 2 8.5 2 10.5 5.5 8.5 9 2.5 9 0.5 5.5z" fill="none" stroke="#c8c8c8" stroke-width="1.3"/><circle cx="5.5" cy="5.5" r="1.8" fill="#c8c8c8"/>
  <path d="M13 3.5h2.5L18.5 1v9l-3-2.5H13z" fill="#c8c8c8"/><path d="M20.5 3a3.5 3.5 0 010 5M22.5 1.5a6 6 0 010 8" fill="none" stroke="#c8c8c8" stroke-width="1.1"/>
  <circle cx="32.5" cy="5.5" r="3.5" fill="#c8c8c8"/>
  <path d="M44.5 5V3.5a2.8 2.8 0 015.6 0V5" fill="none" stroke="#c8c8c8" stroke-width="1.4"/><rect x="43" y="5" width="8.5" height="6" fill="#c8c8c8"/><rect x="46.5" y="6.8" width="1.6" height="2.5" fill="#232323"/>
</svg>
<div class="sep" style="left:65px;top:782px;height:11px;background:#333"></div>
<svg style="left:78px;top:781px" width="12" height="12" viewBox="0 0 12 12"><path d="M0.5 0.5h6l5 5-6 6-5-5z" fill="#c8c8c8"/><circle cx="3.2" cy="3.2" r="1.2" fill="#232323"/></svg>
<div class="sep" style="left:95px;top:782px;height:11px;background:#333"></div>
<div class="t" style="left:100px;top:783px;font-size:9px;color:#888">#</div>
<div class="sep" style="left:125px;top:782px;height:11px;background:#333"></div>
<div class="t" style="left:133px;top:781px;color:#9a9a9a;font-size:11.5px;letter-spacing:-1.5px">レイヤー名</div>
<div class="sep" style="left:465px;top:782px;height:11px;background:#333"></div>
<svg style="left:470px;top:781px" width="112" height="13" viewBox="0 0 112 13">
  <path d="M1 6a5 5 0 0110 0z" fill="#c8c8c8"/><rect x="5" y="5" width="2" height="6" fill="#c8c8c8"/><rect x="2" y="8" width="8" height="1.5" fill="#c8c8c8"/><rect x="0" y="11" width="12" height="1.5" fill="#888"/>
  <circle cx="20" cy="6.5" r="2.2" fill="#c8c8c8"/><path d="M20 1.5v10M15 6.5h10M16.5 3l7 7M23.5 3l-7 7" stroke="#c8c8c8" stroke-width="1"/>
  <path d="M28.5 1.5l10 10" stroke="#c8c8c8" stroke-width="1.2" stroke-dasharray="1.5 1"/>
  <text x="43" y="11" font-size="12" font-style="italic" fill="#c8c8c8" font-family="Liberation Serif">fx</text>
  <rect x="56" y="1" width="11" height="11" fill="none" stroke="#c8c8c8" stroke-width="1.2"/><rect x="58.5" y="3.5" width="6" height="6" fill="#c8c8c8"/>
  <circle cx="74" cy="5" r="4" fill="#c8c8c8"/><circle cx="72" cy="7.5" r="4" fill="none" stroke="#c8c8c8" stroke-width="1"/><circle cx="75" cy="4" r="3.5" fill="#777"/>
  <circle cx="89" cy="6.5" r="5" fill="none" stroke="#c8c8c8" stroke-width="1.2"/><path d="M85.5 10a5 5 0 007-7z" fill="#c8c8c8"/>
  <circle cx="104" cy="6.5" r="4.8" fill="none" stroke="#c8c8c8" stroke-width="1.1"/><path d="M101 5l3-1.5 3 1.5v3l-3 1.5-3-1.5z" fill="none" stroke="#c8c8c8" stroke-width="1"/>
</svg>
<div class="sep" style="left:593px;top:782px;height:11px;background:#333"></div>
<div class="t" style="left:600px;top:781px;color:#9a9a9a;font-size:11.28px;letter-spacing:-0.66px">モード</div>
<div class="t" style="left:669px;top:782px;font-size:10px;color:#9a9a9a">T</div>
<div class="t" style="left:685px;top:781px;color:#9a9a9a;font-size:10.0px;letter-spacing:0.78px">ﾄﾗｯｸﾏｯﾄ</div>
<div class="sep" style="left:750px;top:782px;height:11px;background:#333"></div>
<div class="t" style="left:754px;top:781px;color:#9a9a9a;font-size:11.5px;letter-spacing:-1.0px">親とリンク</div>
<div class="sep" style="left:859px;top:782px;height:11px;background:#333"></div>
<div class="a" style="left:0;top:796px;width:873px;height:1px;background:#141414"></div>
<!-- layer row -->
<div class="a" style="left:1px;top:797px;width:872px;height:16px;background:#292929"></div>
<div class="a" style="left:5px;top:798px;width:13px;height:13px;background:#1d1d1d"></div>
<svg style="left:7px;top:801px" width="11" height="8" viewBox="0 0 11 8"><path d="M0.5 4C2.5 0.8 8.5 0.8 10.5 4 8.5 7.2 2.5 7.2 0.5 4z" fill="none" stroke="#d0d0d0" stroke-width="1.3"/><circle cx="5.5" cy="4" r="1.8" fill="#d0d0d0"/></svg>
<div class="a" style="left:34px;top:798px;width:12px;height:13px;background:#1d1d1d"></div>
<div class="a" style="left:48px;top:798px;width:12px;height:13px;background:#1d1d1d"></div>
<svg style="left:70px;top:802px" width="9" height="6" viewBox="0 0 9 6"><path d="M0.8 0.8L4.5 4.5 8.2 0.8" fill="none" stroke="#c8c8c8" stroke-width="1.3"/></svg>
<div class="a" style="left:82px;top:798px;width:13px;height:13px;background:#c5b38d"></div>
<div class="t" style="left:102px;top:799px;font-size:11.5px;color:#c8c8c8">1</div>
<svg style="left:128px;top:799px" width="16" height="12" viewBox="0 0 16 12"><rect x="0.5" y="0.5" width="15" height="11" fill="#ccc" stroke="#999"/><rect x="3" y="2.5" width="10" height="7" fill="#444"/><circle cx="6" cy="4.5" r="1.8" fill="#2a7ae8"/><rect x="8" y="4" width="4" height="3.5" fill="#e03030"/><path d="M5 9.5l2-3 2 3z" fill="#30c030"/></svg>
<div class="t" style="left:148px;top:799px;color:#c8c8c8;font-size:10.82px;letter-spacing:-1.59px">[プリコンポジション 1]</div>
<svg style="left:470px;top:799px" width="12" height="13" viewBox="0 0 12 13"><path d="M1 6a5 5 0 0110 0z" fill="#c8c8c8"/><rect x="5" y="5" width="2" height="6" fill="#c8c8c8"/><rect x="2" y="8" width="8" height="1.5" fill="#c8c8c8"/><rect x="0" y="11" width="12" height="1.5" fill="#888"/></svg>
<div class="a" style="left:484px;top:798px;width:12px;height:13px;background:#1d1d1d"></div>
<svg style="left:498px;top:799px" width="12" height="12" viewBox="0 0 12 12"><path d="M11 1L1 11" stroke="#d0d0d0" stroke-width="1.5"/></svg>
<div class="a" style="left:540px;top:798px;width:12px;height:13px;background:#1d1d1d"></div>
<div class="a" style="left:554px;top:798px;width:12px;height:13px;background:#1d1d1d"></div>
<div class="a" style="left:568px;top:798px;width:12px;height:13px;background:#1d1d1d"></div>
<div class="a" style="left:597px;top:797px;width:63px;height:15px;background:#1a1a1a;border-radius:2px"></div>
<div class="t" style="left:602px;top:799px;color:#d0d0d0;font-size:11.0px;letter-spacing:-1.0px">通常</div>
<svg style="left:649px;top:802px" width="8" height="5" viewBox="0 0 8 5"><path d="M0.5 0.5L4 4l3.5-3.5" fill="none" stroke="#c8c8c8" stroke-width="1.2"/></svg>
<div class="a" style="left:666px;top:798px;width:12px;height:13px;background:#1d1d1d"></div>
<svg style="left:753px;top:798px" width="13" height="13" viewBox="0 0 13 13"><path d="M5.90 6.50 L5.84 6.39 L5.81 6.26 L5.80 6.11 L5.83 5.96 L5.89 5.81 L5.98 5.66 L6.10 5.52 L6.26 5.41 L6.44 5.32 L6.65 5.26 L6.87 5.24 L7.11 5.26 L7.34 5.33 L7.58 5.44 L7.79 5.60 L7.98 5.80 L8.14 6.04 L8.26 6.32 L8.33 6.62 L8.35 6.94 L8.31 7.27 L8.21 7.60 L8.04 7.92 L7.82 8.21 L7.55 8.46 L7.22 8.67 L6.86 8.83 L6.46 8.92 L6.04 8.94 L5.62 8.89 L5.20 8.77 L4.79 8.56 L4.42 8.29 L4.09 7.95 L3.82 7.55 L3.62 7.10 L3.50 6.61 L3.46 6.09 L3.51 5.57 L3.65 5.05 L3.88 4.55 L4.20 4.09 L4.60 3.68 L5.08 3.35 L5.61 3.09 L6.19 2.92 L6.80 2.86 L7.43 2.90 L8.04 3.04 L8.64 3.30 L9.19 3.66 L9.68 4.11 L10.10 4.65 L10.42 5.26 L10.64 5.93 L10.74 6.63 L10.72 7.36 L10.58 8.08 L10.31 8.77 L9.92 9.42 L9.42 10.01 L8.83 10.50 L8.14 10.90 L7.39 11.18 L6.59 11.32 L5.77 11.34 L4.95 11.21 L4.15 10.94 L3.40 10.53 L2.72 10.00 L2.13 9.35 L1.65 8.60 L1.31 7.77 L1.10 6.88 L1.05 5.96 L1.16 5.04 L1.42 4.13 L1.84 3.28 L2.40 2.49 L3.09 1.81" fill="none" stroke="#c8c8c8" stroke-width="1.2"/></svg>
<div class="a" style="left:772px;top:797px;width:83px;height:15px;background:#1a1a1a;border-radius:2px"></div>
<div class="t" style="left:777px;top:799px;color:#d0d0d0;font-size:11.0px;letter-spacing:-1.61px">なし</div>
<svg style="left:843px;top:802px" width="8" height="5" viewBox="0 0 8 5"><path d="M0.5 0.5L4 4l3.5-3.5" fill="none" stroke="#c8c8c8" stroke-width="1.2"/></svg>
<!-- property rows -->
<div class="a" style="left:1px;top:813px;width:872px;height:1px;background:#1c1c1c"></div>
<div class="a" style="left:1px;top:831px;width:872px;height:1px;background:#1c1c1c"></div>
<div class="a" style="left:1px;top:849px;width:872px;height:1px;background:#1c1c1c"></div>
<div class="a" style="left:1px;top:867px;width:872px;height:1px;background:#1c1c1c"></div>
<div class="a" style="left:1px;top:885px;width:872px;height:1px;background:#1c1c1c"></div>
<div class="a" style="left:1px;top:903px;width:872px;height:1px;background:#1c1c1c"></div>
<div class="a" style="left:1px;top:920px;width:872px;height:1px;background:#1c1c1c"></div>
<svg style="left:89px;top:820px" width="8" height="5" viewBox="0 0 8 5"><path d="M0.7 0.7L4 4 7.3 0.7" fill="none" stroke="#c8c8c8" stroke-width="1.2"/></svg>
<div class="t" style="left:104px;top:817px;color:#c0c0c0;font-size:10.36px;letter-spacing:-1.39px">トランスフォーム</div>
<div class="t b" style="left:469px;top:818px;font-size:9.5px;letter-spacing:0.63px">ﾘｾｯﾄ</div>
<!-- stopwatches -->
<svg style="left:120px;top:834px" width="12" height="84" viewBox="0 0 12 84">
  <g fill="none" stroke="#c0c0c0" stroke-width="1.3">
    <circle cx="6" cy="7" r="4.6"/><path d="M4.5 1h3M6 1v1.5"/>
    <circle cx="6" cy="43" r="4.6"/><path d="M4.5 37h3M6 37v1.5"/>
    <circle cx="6" cy="61" r="4.6"/><path d="M4.5 55h3M6 55v1.5"/>
    <circle cx="6" cy="79" r="4.6"/><path d="M4.5 73h3M6 73v1.5"/>
  </g>
</svg>
<div class="a" style="left:119px;top:850px;width:15px;height:16px;background:#1e1e1e"></div>
<svg style="left:120px;top:852px" width="12" height="12" viewBox="0 0 12 12"><g fill="none" stroke="#3d9cf2" stroke-width="1.3"><circle cx="6" cy="7" r="4.6"/><path d="M4.5 1h3M6 1v1.5M6 7l2-2"/></g></svg>
<svg style="left:137px;top:852px" width="12" height="11" viewBox="0 0 12 11"><path d="M0.7 0v10.3H12M2.5 2l3 5 2-3 3 3" fill="none" stroke="#c0c0c0" stroke-width="1.1"/></svg>
<div class="t" style="left:137px;top:835px;color:#c0c0c0;font-size:10.27px;letter-spacing:-1.49px">アンカーポイント</div>
<div class="t" style="left:155px;top:853px;color:#c0c0c0;font-size:10.6px;letter-spacing:-1.8px">位置</div>
<div class="t" style="left:137px;top:870px;color:#c0c0c0;font-size:11.0px;letter-spacing:-1.6px">スケール</div>
<div class="t" style="left:137px;top:888px;color:#c0c0c0;font-size:10.6px;letter-spacing:-1.8px">回転</div>
<div class="t" style="left:137px;top:906px;color:#c0c0c0;font-size:11.0px;letter-spacing:-1.1px">不透明度</div>
<!-- keyframe nav -->
<svg style="left:8px;top:853px" width="6" height="9" viewBox="0 0 6 9"><path d="M6 0v9L0 4.5z" fill="#555"/></svg>
<div class="a" style="left:19px;top:850px;width:14px;height:15px;background:#1e1e1e"></div>
<svg style="left:21px;top:853px" width="10" height="10" viewBox="0 0 10 10"><path d="M5 0l5 5-5 5-5-5z" fill="#3d9cf2"/></svg>
<svg style="left:37px;top:853px" width="6" height="9" viewBox="0 0 6 9"><path d="M0 0v9l6-4.5z" fill="#c8c8c8"/></svg>
<!-- values -->
<div class="t b" style="left:470px;top:835px;font-size:12.0px;letter-spacing:0.21px">960.0,540.0</div>
<div class="t b" style="left:470px;top:853px;font-size:12.0px;letter-spacing:0.18px">1958.0,540.0</div>
<div class="a" style="left:468px;top:869px;width:14px;height:13px;background:#1e1e1e"></div>
<svg style="left:469px;top:872px" width="13" height="7" viewBox="0 0 13 7"><path d="M5.5 1H3a2.5 2.5 0 000 5h2.5M7.5 1H10a2.5 2.5 0 010 5H7.5M4 3.5h5" fill="none" stroke="#c8c8c8" stroke-width="1.3"/></svg>
<div class="t b" style="left:487px;top:871px;font-size:12.0px;letter-spacing:0.06px">100.0,100.0%</div>
<div class="t b" style="left:470px;top:889px;font-size:12.0px;letter-spacing:-0.05px">0x+0.0°</div>
<div class="t b" style="left:470px;top:907px;font-size:12.0px;letter-spacing:-0.03px">100%</div>
<svg style="left:766px;top:831.5px" width="13" height="84" viewBox="0 0 13 84">
  <g fill="none" stroke="#c8c8c8" stroke-width="1.45">
    <path d="M5.90 6.50 L5.84 6.39 L5.81 6.26 L5.80 6.11 L5.83 5.96 L5.89 5.81 L5.98 5.66 L6.10 5.52 L6.26 5.41 L6.44 5.32 L6.65 5.26 L6.87 5.24 L7.11 5.26 L7.34 5.33 L7.58 5.44 L7.79 5.60 L7.98 5.80 L8.14 6.04 L8.26 6.32 L8.33 6.62 L8.35 6.94 L8.31 7.27 L8.21 7.60 L8.04 7.92 L7.82 8.21 L7.55 8.46 L7.22 8.67 L6.86 8.83 L6.46 8.92 L6.04 8.94 L5.62 8.89 L5.20 8.77 L4.79 8.56 L4.42 8.29 L4.09 7.95 L3.82 7.55 L3.62 7.10 L3.50 6.61 L3.46 6.09 L3.51 5.57 L3.65 5.05 L3.88 4.55 L4.20 4.09 L4.60 3.68 L5.08 3.35 L5.61 3.09 L6.19 2.92 L6.80 2.86 L7.43 2.90 L8.04 3.04 L8.64 3.30 L9.19 3.66 L9.68 4.11 L10.10 4.65 L10.42 5.26 L10.64 5.93 L10.74 6.63 L10.72 7.36 L10.58 8.08 L10.31 8.77 L9.92 9.42 L9.42 10.01 L8.83 10.50 L8.14 10.90 L7.39 11.18 L6.59 11.32 L5.77 11.34 L4.95 11.21 L4.15 10.94 L3.40 10.53 L2.72 10.00 L2.13 9.35 L1.65 8.60 L1.31 7.77 L1.10 6.88 L1.05 5.96 L1.16 5.04 L1.42 4.13 L1.84 3.28 L2.40 2.49 L3.09 1.81"/>
    <path transform="translate(0,18)" d="M5.90 6.50 L5.84 6.39 L5.81 6.26 L5.80 6.11 L5.83 5.96 L5.89 5.81 L5.98 5.66 L6.10 5.52 L6.26 5.41 L6.44 5.32 L6.65 5.26 L6.87 5.24 L7.11 5.26 L7.34 5.33 L7.58 5.44 L7.79 5.60 L7.98 5.80 L8.14 6.04 L8.26 6.32 L8.33 6.62 L8.35 6.94 L8.31 7.27 L8.21 7.60 L8.04 7.92 L7.82 8.21 L7.55 8.46 L7.22 8.67 L6.86 8.83 L6.46 8.92 L6.04 8.94 L5.62 8.89 L5.20 8.77 L4.79 8.56 L4.42 8.29 L4.09 7.95 L3.82 7.55 L3.62 7.10 L3.50 6.61 L3.46 6.09 L3.51 5.57 L3.65 5.05 L3.88 4.55 L4.20 4.09 L4.60 3.68 L5.08 3.35 L5.61 3.09 L6.19 2.92 L6.80 2.86 L7.43 2.90 L8.04 3.04 L8.64 3.30 L9.19 3.66 L9.68 4.11 L10.10 4.65 L10.42 5.26 L10.64 5.93 L10.74 6.63 L10.72 7.36 L10.58 8.08 L10.31 8.77 L9.92 9.42 L9.42 10.01 L8.83 10.50 L8.14 10.90 L7.39 11.18 L6.59 11.32 L5.77 11.34 L4.95 11.21 L4.15 10.94 L3.40 10.53 L2.72 10.00 L2.13 9.35 L1.65 8.60 L1.31 7.77 L1.10 6.88 L1.05 5.96 L1.16 5.04 L1.42 4.13 L1.84 3.28 L2.40 2.49 L3.09 1.81"/>
    <path transform="translate(0,36)" d="M5.90 6.50 L5.84 6.39 L5.81 6.26 L5.80 6.11 L5.83 5.96 L5.89 5.81 L5.98 5.66 L6.10 5.52 L6.26 5.41 L6.44 5.32 L6.65 5.26 L6.87 5.24 L7.11 5.26 L7.34 5.33 L7.58 5.44 L7.79 5.60 L7.98 5.80 L8.14 6.04 L8.26 6.32 L8.33 6.62 L8.35 6.94 L8.31 7.27 L8.21 7.60 L8.04 7.92 L7.82 8.21 L7.55 8.46 L7.22 8.67 L6.86 8.83 L6.46 8.92 L6.04 8.94 L5.62 8.89 L5.20 8.77 L4.79 8.56 L4.42 8.29 L4.09 7.95 L3.82 7.55 L3.62 7.10 L3.50 6.61 L3.46 6.09 L3.51 5.57 L3.65 5.05 L3.88 4.55 L4.20 4.09 L4.60 3.68 L5.08 3.35 L5.61 3.09 L6.19 2.92 L6.80 2.86 L7.43 2.90 L8.04 3.04 L8.64 3.30 L9.19 3.66 L9.68 4.11 L10.10 4.65 L10.42 5.26 L10.64 5.93 L10.74 6.63 L10.72 7.36 L10.58 8.08 L10.31 8.77 L9.92 9.42 L9.42 10.01 L8.83 10.50 L8.14 10.90 L7.39 11.18 L6.59 11.32 L5.77 11.34 L4.95 11.21 L4.15 10.94 L3.40 10.53 L2.72 10.00 L2.13 9.35 L1.65 8.60 L1.31 7.77 L1.10 6.88 L1.05 5.96 L1.16 5.04 L1.42 4.13 L1.84 3.28 L2.40 2.49 L3.09 1.81"/>
    <path transform="translate(0,54)" d="M5.90 6.50 L5.84 6.39 L5.81 6.26 L5.80 6.11 L5.83 5.96 L5.89 5.81 L5.98 5.66 L6.10 5.52 L6.26 5.41 L6.44 5.32 L6.65 5.26 L6.87 5.24 L7.11 5.26 L7.34 5.33 L7.58 5.44 L7.79 5.60 L7.98 5.80 L8.14 6.04 L8.26 6.32 L8.33 6.62 L8.35 6.94 L8.31 7.27 L8.21 7.60 L8.04 7.92 L7.82 8.21 L7.55 8.46 L7.22 8.67 L6.86 8.83 L6.46 8.92 L6.04 8.94 L5.62 8.89 L5.20 8.77 L4.79 8.56 L4.42 8.29 L4.09 7.95 L3.82 7.55 L3.62 7.10 L3.50 6.61 L3.46 6.09 L3.51 5.57 L3.65 5.05 L3.88 4.55 L4.20 4.09 L4.60 3.68 L5.08 3.35 L5.61 3.09 L6.19 2.92 L6.80 2.86 L7.43 2.90 L8.04 3.04 L8.64 3.30 L9.19 3.66 L9.68 4.11 L10.10 4.65 L10.42 5.26 L10.64 5.93 L10.74 6.63 L10.72 7.36 L10.58 8.08 L10.31 8.77 L9.92 9.42 L9.42 10.01 L8.83 10.50 L8.14 10.90 L7.39 11.18 L6.59 11.32 L5.77 11.34 L4.95 11.21 L4.15 10.94 L3.40 10.53 L2.72 10.00 L2.13 9.35 L1.65 8.60 L1.31 7.77 L1.10 6.88 L1.05 5.96 L1.16 5.04 L1.42 4.13 L1.84 3.28 L2.40 2.49 L3.09 1.81"/>
    <path transform="translate(0,72)" d="M5.90 6.50 L5.84 6.39 L5.81 6.26 L5.80 6.11 L5.83 5.96 L5.89 5.81 L5.98 5.66 L6.10 5.52 L6.26 5.41 L6.44 5.32 L6.65 5.26 L6.87 5.24 L7.11 5.26 L7.34 5.33 L7.58 5.44 L7.79 5.60 L7.98 5.80 L8.14 6.04 L8.26 6.32 L8.33 6.62 L8.35 6.94 L8.31 7.27 L8.21 7.60 L8.04 7.92 L7.82 8.21 L7.55 8.46 L7.22 8.67 L6.86 8.83 L6.46 8.92 L6.04 8.94 L5.62 8.89 L5.20 8.77 L4.79 8.56 L4.42 8.29 L4.09 7.95 L3.82 7.55 L3.62 7.10 L3.50 6.61 L3.46 6.09 L3.51 5.57 L3.65 5.05 L3.88 4.55 L4.20 4.09 L4.60 3.68 L5.08 3.35 L5.61 3.09 L6.19 2.92 L6.80 2.86 L7.43 2.90 L8.04 3.04 L8.64 3.30 L9.19 3.66 L9.68 4.11 L10.10 4.65 L10.42 5.26 L10.64 5.93 L10.74 6.63 L10.72 7.36 L10.58 8.08 L10.31 8.77 L9.92 9.42 L9.42 10.01 L8.83 10.50 L8.14 10.90 L7.39 11.18 L6.59 11.32 L5.77 11.34 L4.95 11.21 L4.15 10.94 L3.40 10.53 L2.72 10.00 L2.13 9.35 L1.65 8.60 L1.31 7.77 L1.10 6.88 L1.05 5.96 L1.16 5.04 L1.42 4.13 L1.84 3.28 L2.40 2.49 L3.09 1.81"/>
  </g>
</svg>
<div class="a" style="left:873px;top:777px;width:2px;height:285px;background:#141414"></div>

<!-- right timeline -->
<div class="a" style="left:876px;top:750px;width:688px;height:8px;background:#6e6e6e;border-radius:4px;box-shadow:0 0 0 1px #151515"></div>
<div class="a" style="left:876px;top:750px;width:6px;height:8px;background:#3d9cf2;border-radius:4px 0 0 4px"></div>
<div class="a" style="left:1558px;top:750px;width:6px;height:8px;background:#3d9cf2;border-radius:0 4px 4px 0"></div>
<div class="a" style="left:876px;top:777px;width:705px;height:2px;background:#141414"></div>
<div class="a" style="left:876px;top:779px;width:682px;height:13px;background:#646464"></div>
<div class="a" style="left:877px;top:779px;width:5px;height:13px;background:#3d9cf2;border-radius:3px 0 0 3px"></div>
<div class="a" style="left:1558px;top:779px;width:5px;height:13px;background:#3d9cf2;border-radius:0 3px 3px 0"></div>
<div class="a" style="left:882px;top:792px;width:676px;height:3px;background:#00e000"></div>
<div class="a" style="left:876px;top:795px;width:705px;height:2px;background:#141414"></div>
<svg style="left:1567px;top:779px" width="11" height="13" viewBox="0 0 11 13"><path d="M0 0h11v8l-5.5 5L0 8z" fill="#c8c8c8"/></svg>
<!-- layer bar -->
<div class="a" style="left:876px;top:797px;width:6px;height:16px;background:#262626"></div>
<div class="a" style="left:882px;top:797px;width:675px;height:15px;background:#736a58;border-radius:3px 3px 0 0"></div>
<!-- rows -->
<div class="a" style="left:876px;top:813px;width:4px;height:248px;background:#262626"></div>
<div class="a" style="left:880px;top:813px;width:677px;height:248px;background:#333333"></div>
<div class="a" style="left:1557px;top:813px;width:7px;height:248px;background:#2a2a2a"></div>
<div class="a" style="left:880px;top:831px;width:684px;height:1px;background:#282828"></div>
<div class="a" style="left:880px;top:849px;width:684px;height:1px;background:#282828"></div>
<div class="a" style="left:880px;top:867px;width:684px;height:1px;background:#282828"></div>
<div class="a" style="left:880px;top:885px;width:684px;height:1px;background:#282828"></div>
<div class="a" style="left:880px;top:903px;width:684px;height:1px;background:#282828"></div>
<div class="a" style="left:880px;top:920px;width:684px;height:1px;background:#282828"></div>
<div class="a" style="left:1564px;top:797px;width:17px;height:265px;background:#262626"></div>
<svg style="left:1564px;top:798px" width="15" height="12" viewBox="0 0 15 12"><path d="M1 7l6-6h2v4" fill="none" stroke="#c8c8c8" stroke-width="1.1"/><circle cx="5" cy="8" r="3" fill="none" stroke="#c8c8c8" stroke-width="1.2"/><rect x="8" y="4" width="6" height="5.5" fill="#c8c8c8"/></svg>
<!-- keyframe markers -->
<svg style="left:878px;top:816px" width="8" height="100" viewBox="0 0 8 100">
  <g fill="none" stroke="#c4c4c4" stroke-width="1.5"><path d="M1 1h6M4 1v9M1 10h6"/><path d="M1 19h6M4 19v9M1 28h6"/><path d="M1 55h6M4 55v9M1 64h6"/><path d="M1 73h6M4 73v9M1 82h6"/><path d="M1 91h6M4 91v9M1 100h6"/></g>
  <path d="M4 38l3.5 3.8L4 45.6 0.5 41.8z" fill="#aaa"/>
</svg>
<svg style="left:1549px;top:854px" width="8" height="8" viewBox="0 0 8 8"><path d="M4 0l4 4-4 4-4-4z" fill="#aaa"/></svg>
<!-- ruler -->
<div class="a" style="left:876px;top:759px;width:688px;height:18px;overflow:hidden">
<svg style="left:0;top:0" width="688" height="18" viewBox="876 759 688 18">
  <g font-family="Liberation Sans" font-size="12.3" fill="#c8c8c8">
    <text x="863" y="769">00:00f</text>
    <text x="920" y="769">00:15f</text><text x="976" y="769">01:00f</text><text x="1032" y="769">01:15f</text><text x="1089" y="769">02:00f</text><text x="1145" y="769">02:15f</text><text x="1201" y="769">03:00f</text><text x="1258" y="769">03:15f</text><text x="1314" y="769">04:00f</text><text x="1370" y="769">04:15f</text><text x="1427" y="769">05:00f</text><text x="1483" y="769">05:15f</text><text x="1540" y="769">06:00f</text>
  </g>
  <g fill="#bbb">
    <rect x="938" y="771" width="1" height="5"/><rect x="994" y="769" width="1" height="7"/><rect x="1050" y="771" width="1" height="5"/><rect x="1107" y="769" width="1" height="7"/><rect x="1163" y="771" width="1" height="5"/><rect x="1219" y="769" width="1" height="7"/><rect x="1275" y="771" width="1" height="5"/><rect x="1332" y="769" width="1" height="7"/><rect x="1388" y="771" width="1" height="5"/><rect x="1444" y="769" width="1" height="7"/><rect x="1500" y="771" width="1" height="5"/><rect x="1557" y="769" width="1" height="7"/>
  </g>
</svg>
</div>
<div class="a" style="left:1564px;top:759px;width:17px;height:18px;background:#232323"></div>
<!-- playhead -->
<div class="a" style="left:881px;top:762px;width:1px;height:300px;background:#3d9cf2"></div>
<svg style="left:876px;top:762px" width="11" height="15" viewBox="0 0 11 15"><path d="M0.5 0.5h10v7L5.5 14.5 0.5 7.5z" fill="#3d9cf2"/><path d="M3 6h5l-2.5 4z" fill="#8cc8ff"/></svg>
<!-- timeline status bar -->
<div class="a" style="left:0;top:1061px;width:975px;height:2px;background:#0e0e0e"></div>
<div class="a" style="left:0;top:1063px;width:975px;height:17px;background:#282828"></div>
<div class="a" style="left:7px;top:1064px;width:14px;height:15px;background:#1e1e1e"></div>
<svg style="left:8px;top:1065px" width="12" height="13" viewBox="0 0 12 13"><rect x="0.5" y="0.5" width="7" height="7" fill="none" stroke="#3d9cf2" stroke-width="1.1"/><rect x="2.5" y="2.5" width="7" height="7" fill="#262626" stroke="#3d9cf2" stroke-width="1.1"/><rect x="4.5" y="4.5" width="7" height="7" fill="#262626" stroke="#3d9cf2" stroke-width="1.1"/><rect x="6.5" y="6.5" width="3" height="3" fill="#3d9cf2"/></svg>
<div class="a" style="left:24px;top:1064px;width:14px;height:15px;background:#1e1e1e"></div>
<svg style="left:25px;top:1065px" width="12" height="13" viewBox="0 0 12 13"><circle cx="4.5" cy="4.5" r="4" fill="none" stroke="#3d9cf2" stroke-width="1.2"/><rect x="5" y="6" width="6.5" height="6.5" fill="#262626" stroke="#3d9cf2" stroke-width="1.1"/></svg>
<svg style="left:44px;top:1065px" width="11" height="12" viewBox="0 0 11 12"><path d="M3 0.5C1 0.5 2 5 0.5 6 2 7 1 11.5 3 11.5M8 0.5c2 0 1 4.5 2.5 5.5C9 7 10 11.5 8 11.5" fill="none" stroke="#c0c0c0" stroke-width="1.3"/><rect x="4" y="2" width="3" height="8" fill="#999"/></svg>
<svg style="left:61px;top:1065px" width="13" height="11" viewBox="0 0 13 11"><path d="M1 10c0-4 2-8 5-8s4 3 4 5v3z" fill="#c0c0c0"/><path d="M10 5l2.5-3M10.5 7l2.5-1" stroke="#c0c0c0" stroke-width="1"/><rect x="0" y="9" width="11" height="2" fill="#c0c0c0"/></svg>
<div class="t" style="left:82px;top:1066px;color:#b0b0b0;font-size:11.0px;letter-spacing:-0.94px">フレームレンダリング時間</div>
<div class="t" style="left:209px;top:1066px;color:#5fd3a2;font-size:10.69px;letter-spacing:-1.8px">7ms</div>
<svg style="left:879px;top:1067px" width="11" height="6" viewBox="0 0 11 6"><path d="M0 6l4-5 2 2.5L7.5 1 11 6z" fill="#c8c8c8"/></svg>
<div class="a" style="left:909px;top:1069px;width:35px;height:2px;background:#444"></div>
<div class="a" style="left:899px;top:1066px;width:10px;height:10px;border:2px solid #b0b0b0;border-radius:50%"></div>
<svg style="left:955px;top:1066px" width="16" height="8" viewBox="0 0 16 8"><path d="M0 8l4-6 1 1.5L3 8zM4 8l6-8 6 8z" fill="#c8c8c8"/></svg>
<div class="a" style="left:0;top:1070px;width:10px;height:10px;background:#4a6fa0;clip-path:polygon(0 0,0 100%,100% 100%,40% 85%,10% 50%)"></div>
</body></html>
